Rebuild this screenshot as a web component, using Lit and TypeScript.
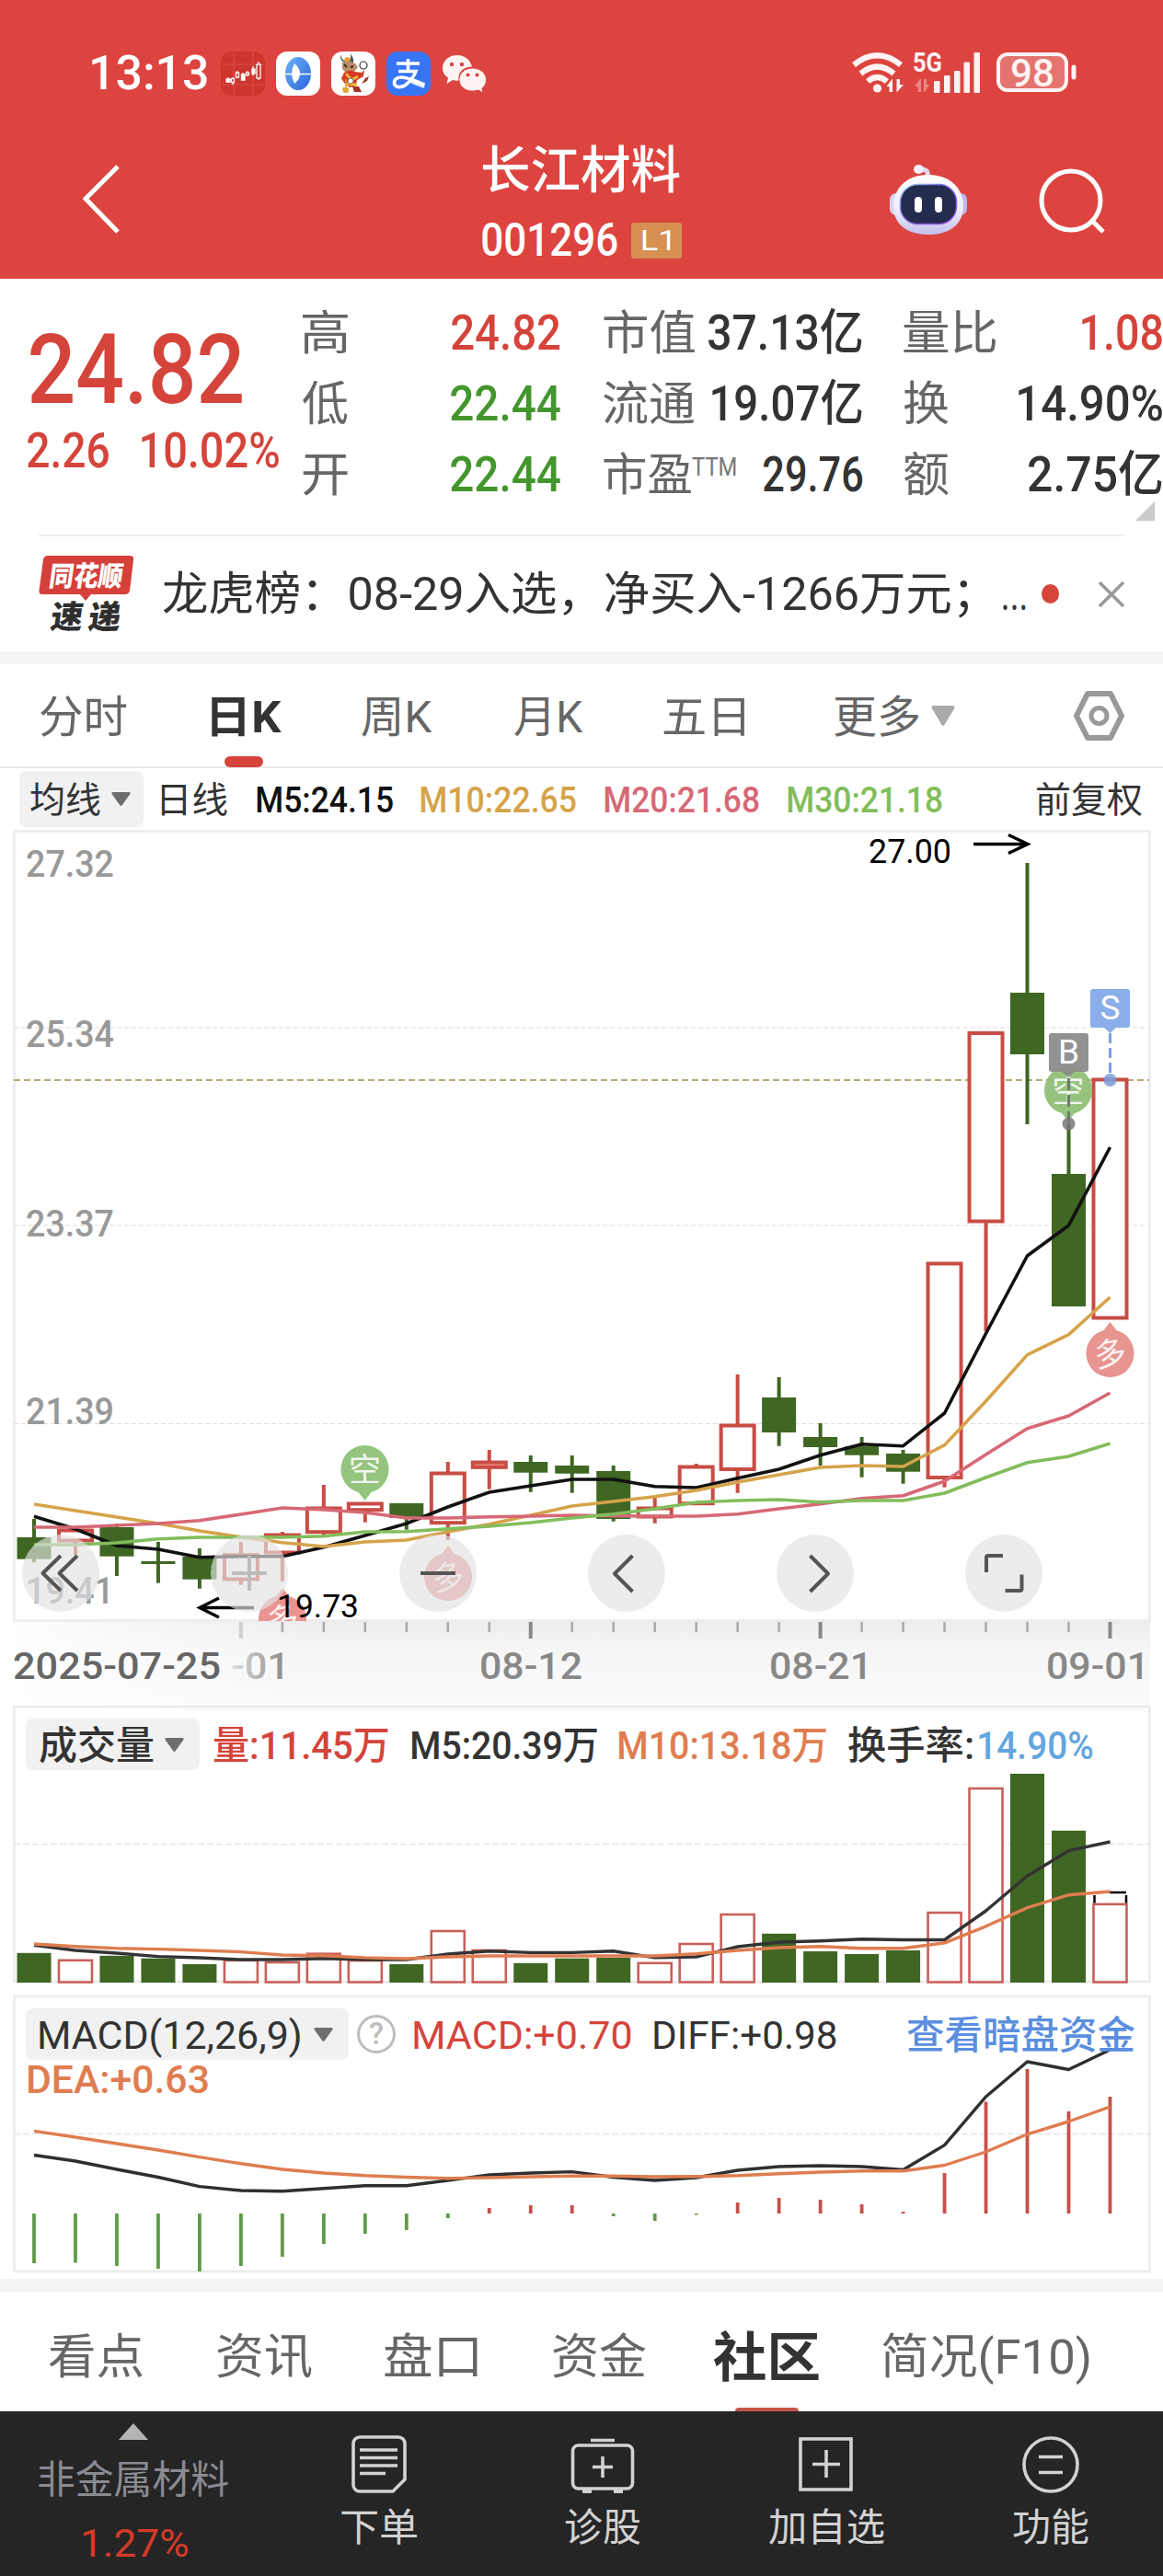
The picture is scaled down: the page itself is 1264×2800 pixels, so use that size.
import { LitElement, html, svg, css } from "lit";
import { customElement, property } from "lit/decorators.js";

const CANDLE_RED = "#c84d45";
const GREEN = "#3f6622";

const px = (i: number) => 37 + 44.98 * i;

/** Text squeezed or stretched so that its ink spans exactly `w` pixels. */
@customElement("fit-text")
class FitText extends LitElement {
  @property({ type: Number }) w = 0;
  @property() text = "";

  static styles = css`
    :host { display: inline-block; white-space: nowrap; text-align: left; }
    .ink { display: inline-block; transform-origin: 0 50%; white-space: pre; }
  `;

  updated() {
    const ink = this.renderRoot.querySelector(".ink") as HTMLElement;
    const cs = getComputedStyle(this);
    const ctx = document.createElement("canvas").getContext("2d")!;
    ctx.font = `${cs.fontStyle} ${cs.fontWeight} ${cs.fontSize} ${cs.fontFamily}`;
    const m = ctx.measureText(this.text);
    const left = m.actualBoundingBoxLeft;
    const width = left + m.actualBoundingBoxRight;
    const s = width > 0 ? this.w / width : 1;
    this.style.width = `${this.w}px`;
    ink.style.transform = `translateX(${left * s}px) scaleX(${s})`;
  }

  render() {
    return html`<span class="ink">${this.text}</span>`;
  }
}
void FitText;

const fit = (text: string, w: number, cls = "") =>
  html`<fit-text class=${cls} .text=${text} .w=${w}></fit-text>`;

const line = (ys: number[], color: string, width = 4) => svg`
  <polyline fill="none" stroke=${color} stroke-width=${width} stroke-linejoin="round"
    points=${ys.map((y, i) => `${px(i).toFixed(1)},${y}`).join(" ")}></polyline>`;

// [rising, body top, body bottom, high, low]
const candles: [number, number, number, number, number][] = [
  [0, 1671, 1694.7, 1651, 1698], [1, 1662, 1676, 1662, 1690], [0, 1660, 1691.7, 1656, 1713],
  [0, 1697, 1700, 1676, 1720.7], [0, 1691.7, 1716.7, 1683, 1726.7], [1, 1688.7, 1718, 1676, 1722.7],
  [1, 1667, 1689, 1665, 1718.7], [1, 1638, 1666.7, 1614, 1671], [1, 1633, 1642.7, 1633, 1654.7],
  [0, 1634, 1650, 1634, 1662.7], [1, 1600, 1656.7, 1589, 1674], [1, 1588, 1596.3, 1576, 1618.7],
  [0, 1589, 1600.7, 1582, 1621.7], [0, 1593, 1601.7, 1582, 1622.7], [0, 1599, 1651, 1593, 1653.7],
  [1, 1638, 1650, 1628, 1655.7], [1, 1593, 1635.7, 1591, 1635.7], [1, 1548, 1598.5, 1494, 1622.7],
  [0, 1519, 1557, 1497, 1571.7], [0, 1562, 1573, 1547, 1593], [0, 1572, 1581.7, 1562, 1605.7],
  [0, 1580, 1599.7, 1576, 1612.7], [1, 1372, 1607.5, 1372, 1616.7], [1, 1121.5, 1329, 1121.5, 1447],
  [0, 1079, 1146, 938, 1222], [0, 1276, 1420, 1222, 1420], [1, 1172, 1434, 1172, 1434],
];

const ma5 = [1648.3, 1662, 1680, 1684, 1692.7, 1691.7, 1691.7, 1681.7, 1669, 1656, 1638, 1622, 1615, 1608, 1608, 1615.7, 1617, 1606.7, 1597, 1581.7, 1569.7, 1571.7, 1536, 1449.5, 1365, 1332, 1247];
const ma10 = [1635, 1642, 1649, 1656, 1664, 1670.7, 1676.7, 1681, 1676, 1674, 1665, 1656.7, 1647, 1637, 1632, 1626.7, 1620, 1611, 1603, 1595, 1593, 1594, 1570.7, 1523, 1472.6, 1450.6, 1410];
const ma20 = [1660, 1660, 1658, 1656, 1652.7, 1646, 1639, 1641, 1644, 1650, 1650, 1648.7, 1648, 1647, 1647.7, 1648, 1648, 1645.7, 1640, 1634.7, 1628.7, 1625.7, 1610, 1581, 1552.7, 1539, 1514];
const ma30 = [1679, 1679, 1677, 1672.7, 1671, 1671, 1671, 1669.7, 1665, 1664.7, 1661.7, 1659, 1655, 1650, 1645.7, 1640, 1633, 1631, 1630, 1632.7, 1631, 1631, 1623, 1606, 1589.7, 1583, 1569];

const volumeTop = [2122.8, 2130.8, 2125.8, 2128.7, 2135, 2130.8, 2133, 2123.7, 2131, 2135, 2099, 2120, 2133.8, 2128.7, 2127.9, 2133.8, 2113, 2081, 2101.8, 2121, 2124, 2120, 2079, 1944, 1928, 1989.8, 2069.8];
const vol5 = [2114.4, 2120, 2123, 2126.6, 2128, 2130, 2130, 2128.7, 2130, 2130, 2124, 2120.7, 2122.4, 2122.4, 2120.7, 2127.9, 2127, 2116, 2111, 2109.8, 2107.7, 2108.5, 2108.5, 2077, 2039, 2011.7, 2002];
const vol10 = [2113, 2115.7, 2117.8, 2118.6, 2120, 2121.6, 2125, 2125.8, 2127.9, 2129, 2127, 2126, 2126, 2126, 2126, 2126, 2123.7, 2120, 2117, 2115.7, 2117.8, 2117.8, 2111.9, 2093.8, 2073.6, 2059.7, 2056];

const macdEnd = [2460, 2459.5, 2463, 2466, 2469, 2463, 2453, 2439, 2428, 2424, 2411, 2400, 2397, 2397, 2409, 2414, 2407.5, 2394, 2389, 2391, 2396, 2404, 2362, 2284.5, 2249, 2295, 2279];
const diff = [2342.5, 2349, 2358, 2366.5, 2376.6, 2381, 2381.7, 2378.7, 2375.8, 2375.8, 2370, 2364, 2362, 2360.6, 2366.5, 2370, 2367, 2359, 2355, 2354, 2355, 2358.5, 2331.6, 2279, 2241, 2249.5, 2228];
const dea = [2316.4, 2323, 2330, 2337, 2344.6, 2351.8, 2358, 2362, 2364.8, 2366.5, 2367.8, 2367, 2366, 2365.3, 2365.3, 2366, 2365.8, 2364.8, 2362.7, 2361, 2359.8, 2359.8, 2353.5, 2339, 2319.8, 2306, 2290];

const label = (x: number, base: number, w: number, text: string, size: number, fill: string, weight = 400) => svg`
  <text x=${x} y=${base} textLength=${w} lengthAdjust="spacingAndGlyphs" font-size=${size}
    font-weight=${weight} fill=${fill}>${text}</text>`;

const balloon = (cx: number, cy: number, up: boolean, char: string, fill: string) => svg`
  <path fill=${fill} d=${up
    ? `M${cx} ${cy - 34} l7 9 a26 26 0 1 1 -14 0 z`
    : `M${cx} ${cy + 34} l7 -9 a26 26 0 1 0 -14 0 z`}></path>
  <text x=${cx} y=${cy + 13} font-size="35" fill="#fff" fill-opacity=".88" text-anchor="middle"
    transform=${up ? `rotate(-10 ${cx} ${cy})` : "rotate(0)"}>${char}</text>`;

const roundButtons = [66, 271, 476, 681, 886, 1091];
const priceAxis: [string, number][] = [["27.32", 952.5], ["25.34", 1138], ["23.37", 1343.5], ["21.39", 1547.5], ["19.41", 1743]];

const priceChart = () => html`
  <svg class="chart" viewBox="0 900 1264 954" width="1264" height="954">
    <defs>
      <linearGradient id="band" x1="0" y1="0" x2="0" y2="1">
        <stop offset="0" stop-color="#ededed"></stop><stop offset=".35" stop-color="#f6f6f6"></stop>
        <stop offset="1" stop-color="#fbfbfb"></stop>
      </linearGradient>
      <linearGradient id="bandFade" x1="0" y1="0" x2="1" y2="0">
        <stop offset="0" stop-color="#fff"></stop><stop offset="1" stop-color="#fff" stop-opacity="0"></stop>
      </linearGradient>
      <linearGradient id="dateFade" gradientUnits="userSpaceOnUse" x1="240" y1="0" x2="312" y2="0">
        <stop offset="0" stop-color="#888" stop-opacity=".1"></stop><stop offset="1" stop-color="#888"></stop>
      </linearGradient>
      <clipPath id="plot"><rect x="15" y="903" width="1235" height="859"></rect></clipPath>
    </defs>
    <rect x="15" y="1762" width="1235" height="92" fill="url(#band)"></rect>
    <rect x="0" y="1762" width="330" height="92" fill="url(#bandFade)"></rect>
    <rect x="15.5" y="903.5" width="1234" height="858" fill="none" stroke="#ebebeb" stroke-width="2.5"></rect>
    ${[1117, 1332, 1547.5].map((y) => svg`<path d="M15 ${y}H1249" stroke="#dedede" stroke-width="1.2" stroke-dasharray="5 3"></path>`)}
    ${priceAxis.map(([t, y]) => label(28, y, 96, t, 41, "#999", 500))}
    <path d="M15 1174H1249" stroke="#b7aa75" stroke-width="2" stroke-dasharray="7 4"></path>
    <g clip-path="url(#plot)">
      ${candles.map(([up, top, bot, hi, lo], i) => {
        const x = px(i);
        return up
          ? svg`<path d="M${x} ${hi}V${top}M${x} ${bot}V${lo}" stroke=${CANDLE_RED} stroke-width="4"></path>
              <rect x=${x - 18} y=${top + 1.5} width="36" height=${Math.max(bot - top - 3, 3)}
                fill=${i === 11 ? "#f08f88" : "#fff"} stroke=${CANDLE_RED} stroke-width="4"></rect>`
          : svg`<path d="M${x} ${hi}V${lo}" stroke=${GREEN} stroke-width="4"></path>
              <rect x=${x - 18.5} y=${top} width="37" height=${bot - top} fill=${GREEN}></rect>`;
      })}
      ${line(ma5, "#111", 3.6)}${line(ma10, "#d6a34a", 3.6)}${line(ma20, "#d76876", 3.6)}${line(ma30, "#82bd5c", 3.6)}
      ${balloon(396.5, 1597, false, "空", "#95c47e")}
      ${balloon(1161, 1185, false, "空", "rgba(141,191,116,.92)")}
      ${balloon(487, 1714, true, "多", "#e89490")}
      ${balloon(307, 1760, true, "多", "#e89490")}
      ${balloon(1206.5, 1471, true, "多", "#e89490")}
    </g>
    <path d="M1058 917.5H1117M1096 907.5L1117 917.5L1096 927.5" fill="none" stroke="#000" stroke-width="3.4"></path>
    ${label(944, 938, 90, "27.00", 36, "#000")}
    <path d="M276 1747.5H217M238 1737L217 1747.5L238 1758" fill="none" stroke="#000" stroke-width="3.4"></path>
    ${label(301, 1757.5, 89, "19.73", 35, "#000")}
    <g>
      <path d="M1143 1123h37a3 3 0 0 1 3 3v36a3 3 0 0 1-3 3h-12l-7 6l-7-6h-11a3 3 0 0 1-3-3v-36a3 3 0 0 1 3-3z" fill="#8c8c8c" fill-opacity=".95"></path>
      <text x="1161.5" y="1156" font-size="37" fill="#fff" text-anchor="middle">B</text>
      <path d="M1161.5 1172V1222" stroke="#6f7a6a" stroke-width="3" stroke-dasharray="13 5"></path>
      <circle cx="1161.5" cy="1221.5" r="7" fill="#777" fill-opacity=".85"></circle>
      <path d="M1188 1075h37a3 3 0 0 1 3 3v36a3 3 0 0 1-3 3h-12l-6.5 6l-6.5-6h-12a3 3 0 0 1-3-3v-36a3 3 0 0 1 3-3z" fill="#8aaeea"></path>
      <text x="1206.5" y="1107.5" font-size="37" fill="#fff" text-anchor="middle">S</text>
      <path d="M1206.5 1123V1174" stroke="#7d9fdc" stroke-width="3" stroke-dasharray="11 5"></path>
      <circle cx="1206.5" cy="1174" r="7" fill="#7c9bd8" fill-opacity=".85"></circle>
    </g>
    ${roundButtons.map((x) => svg`<circle cx=${x} cy="1710" r="42" fill="#e2e2e2" fill-opacity=".66"></circle>`)}
    <g fill="none" stroke="#555" stroke-width="4" stroke-linejoin="round">
      <path d="M66 1691L46.5 1710L66 1729M84 1691L64.5 1710L84 1729"></path>
      <path d="M252 1710H290M271 1691V1729" stroke="#bdbdbd"></path>
      <path d="M457 1710H495"></path>
      <path d="M687.5 1691L668 1710.5L687.5 1730"></path>
      <path d="M880.5 1691L900 1710.5L880.5 1730"></path>
      <path d="M1090 1691H1074a2 2 0 0 0-2 2V1709M1092.5 1729H1108.5a2 2 0 0 0 2-2V1711.5"></path>
    </g>
    ${Array.from({ length: 22 }, (_, k) => k + 5).map((i) => {
      const major = [5, 12, 19, 26].includes(i);
      return svg`<path d="M${px(i)} 1763V${major ? 1781 : 1774}" stroke=${i === 5 ? "#cfcfcf" : major ? "#888" : "#aaa"} stroke-width=${major ? 4 : 2.5}></path>`;
    })}
    ${label(14, 1825, 226, "2025-07-25", 41, "#666", 500)}
    ${label(251, 1825, 64, "-01", 41, "url(#dateFade)", 500)}
    ${label(521, 1825, 112, "08-12", 41, "#888", 500)}
    ${label(836, 1825, 112, "08-21", 41, "#888", 500)}
    ${label(1137, 1825, 112, "09-01", 41, "#888", 500)}
  </svg>`;

const volumeChart = () => html`
  <svg class="chart" viewBox="0 1854 1264 306" width="1264" height="306">
    <rect x="200" y="1854" width="1050" height="7" fill="#fbfbfb"></rect>
    <rect x="15.5" y="1855" width="1234" height="299" fill="none" stroke="#ebebeb" stroke-width="2.5"></rect>
    <path d="M15 2004.5H1249" stroke="#dedede" stroke-width="1.2" stroke-dasharray="7 3"></path>
    ${volumeTop.map((y, i) => candles[i][0]
      ? svg`<rect x=${px(i) - 18} y=${y} width="36" height=${2154.5 - y} fill="#fff" stroke="#c8605a" stroke-width="2.6"></rect>`
      : svg`<rect x=${px(i) - 18.5} y=${y} width="37" height=${2155 - y} fill=${GREEN}></rect>`)}
    <path d="M1189.5 2060V2068.5M1224 2060V2068.5M1206 2057H1224" stroke="#000" stroke-width="2.5" fill="none"></path>
    ${line(vol5, "#333", 3.4)}${line(vol10, "#df7d50", 3.4)}
  </svg>`;

const macdChart = () => html`
  <svg class="chart" viewBox="0 2160 1264 317" width="1264" height="317">
    <rect x="15.5" y="2170" width="1234" height="299" fill="none" stroke="#ebebeb" stroke-width="2.5"></rect>
    <path d="M15 2319.5H1249" stroke="#dedede" stroke-width="1.2" stroke-dasharray="7 3"></path>
    ${macdEnd.map((y, i) => svg`<path d="M${px(i)} 2406V${y}" stroke=${y > 2406 ? "#609b48" : "#c4514a"} stroke-width="3.8"></path>`)}
    ${line(diff, "#2f2f2f", 3.4)}${line(dea, "#df7d50", 3.4)}
  </svg>`;

const caret = (w: number, h: number, fill: string) => html`
  <svg width=${w} height=${h} viewBox="0 0 20 14" preserveAspectRatio="none">
    <path d="M1.5 0H18.5Q20.3 .6 19.3 2L11.3 13Q10 14.6 8.7 13L.7 2Q-.3 .6 1.5 0Z" fill=${fill}></path>
  </svg>`;

const statusApps = () => html`
  <svg width="294" height="56" viewBox="237 52 294 56">
    <defs>
      <linearGradient id="ring" x1="0" y1="0" x2="1" y2="1">
        <stop offset="0" stop-color="#6db4f7"></stop><stop offset="1" stop-color="#2a63dc"></stop>
      </linearGradient>
    </defs>
    <rect x="240" y="56" width="48" height="48" rx="12" fill="#cf352f"></rect>
    <path d="M254 57V103M275 57V103M241 70H287M241 92H287" stroke="#d8504a" stroke-width="1"></path>
    <g stroke="#fff" stroke-width="1.3" fill="none">
      <path d="M248 84V90M253 84V92M258 77V85M264 79V88M269 77V83M275 72V82M281 67V87"></path>
      <g fill="#fff"><rect x="246" y="86" width="4" height="3"></rect><rect x="262.5" y="81" width="3.5" height="6"></rect><rect x="274" y="75" width="3" height="5"></rect></g>
      <g fill="#cf352f"><rect x="251.5" y="85.5" width="3" height="4"></rect><rect x="256.5" y="79" width="3" height="5"></rect><rect x="267.5" y="79" width="3" height="2.5"></rect><rect x="279" y="70" width="4" height="15"></rect></g>
    </g>
    <rect x="300" y="56" width="48" height="48" rx="12" fill="#fff"></rect>
    <ellipse cx="324" cy="80" rx="14" ry="18" fill="url(#ring)"></ellipse>
    <path d="M320 69Q326 74 326 80Q326 86 320 91Q317 85 317 80Q317 74 320 69Z" fill="#fff"></path>
    <path d="M308 80.5H340" stroke="#fff" stroke-width="1.5"></path>
    <rect x="360" y="56" width="48" height="48" rx="12" fill="#fff"></rect>
    <path d="M370 59Q369 66 375 68L384 68Q385 64 381 58Q382 64 379 66H374Q371 64 370 59Z" fill="#4a5560"></path>
    <path d="M374 64Q378 60 381 64L380 67H375Z" fill="#e8a23c"></path>
    <path d="M372 68Q378 64 386 69L389 73L385 78H375L372 75Z" fill="#b98d68"></path>
    <path d="M374 70l3 3M381 73l3-1" stroke="#3b2a20" stroke-width="2"></path>
    <path d="M374 79Q380 75 386 78L393 79L396 76L395 83L388 87L387 93L380 95L374 90L371 85Z" fill="#d43a22"></path>
    <path d="M376 80l6 7l7-4M376 91l12 1" stroke="#f0b73a" stroke-width="3" fill="none"></path>
    <circle cx="395" cy="71" r="4" fill="#fff" stroke="#333" stroke-width="1.2"></circle>
    <circle cx="381" cy="88" r="3" fill="#fff" stroke="#555" stroke-width=".8"></circle>
    <path d="M376 86V96M373 96h5v4h-4z" stroke="#d7a01f" stroke-width="1.5" fill="#e9b62e"></path>
    <path d="M383 94h7l3 6h-8zM393 91l4-6l4-2l-2 5z" fill="#a03522"></path>
    <rect x="420" y="56" width="48" height="48" rx="12" fill="#3875f5"></rect>
    <path d="M431 69H456M443.5 64V76M433 77.5H452Q449 86 440 93Q431 97 428.5 91Q428 84 437 84Q446 85 461 92" fill="none" stroke="#fff" stroke-width="3.6"></path>
    <path d="M446 87Q454 91 462 90L461 96Q452 93 446 90Z" fill="#fff" fill-opacity=".85"></path>
    <g fill="#fff3f3">
      <path d="M497 60C488 60 481 66 481 74C481 79 483.5 82 487 84.5L485.5 91L492 87Q496 88 499 87.5C497 79 503 73 513 72.5C511 65 505 60 497 60Z"></path>
      <path d="M513.5 74C505 74 499 79.5 499 86.5C499 93.5 505 99 513.5 99Q517 99 520 98L525 101L524 96C527 94 528.5 90.5 528.5 86.5C528.5 79.5 522 74 513.5 74Z" stroke="#dd443f" stroke-width="1"></path>
    </g>
    <g fill="#d8443f"><circle cx="491" cy="70" r="2.2"></circle><circle cx="502" cy="70" r="2.2"></circle><circle cx="508.5" cy="81.5" r="2"></circle><circle cx="518.5" cy="81.5" r="2"></circle></g>
  </svg>`;

const statusSystem = () => html`
  <svg width="248" height="60" viewBox="924 48 248 60">
    <g fill="none" stroke="#fff3f3" stroke-width="6.2">
      <path d="M928 70.5Q953.5 50 979 70.5"></path>
      <path d="M935.5 80Q953.5 65 971.5 80"></path>
      <path d="M943 88.5Q953.5 79.5 964 88.5"></path>
    </g>
    <circle cx="953.5" cy="96" r="4.6" fill="#fff3f3"></circle>
    <g fill="#fff3f3">
      <path d="M970 86V100H966.5V94H963.5L969.5 86ZM974.5 100V86H978V92H982L975 100Z"></path>
      <path d="M1001 86V100H997.5V94H994L1000 86ZM1004 100V86H1007V92H1010L1005 100Z" opacity=".4"></path>
      <text x="992" y="78" textLength="32" lengthAdjust="spacingAndGlyphs" font-size="30" font-weight="700">5G</text>
      <rect x="1015" y="88" width="6.5" height="13" rx="1"></rect><rect x="1026" y="82" width="6.5" height="19" rx="1"></rect>
      <rect x="1037" y="77" width="6.5" height="24" rx="1"></rect><rect x="1047.5" y="67.5" width="6.5" height="33.5" rx="1"></rect>
      <rect x="1058.5" y="57" width="6.5" height="44" rx="1"></rect>
      <rect x="1085" y="59" width="74" height="39" rx="10" fill="#fff" fill-opacity=".25" stroke="#fff3f3" stroke-width="4"></rect>
      <rect x="1164.5" y="70.5" width="5" height="16" rx="2.5"></rect>
      <text x="1098" y="94" textLength="48" lengthAdjust="spacingAndGlyphs" font-size="43" font-weight="500">98</text>
    </g>
  </svg>`;

const robot = () => html`
  <svg class="robot" width="86" height="80" viewBox="966 175 86 80">
    <defs>
      <linearGradient id="shell" x1="0" y1="0" x2="0" y2="1">
        <stop offset="0" stop-color="#fff"></stop><stop offset=".6" stop-color="#ecebfb"></stop><stop offset="1" stop-color="#c3c0ea"></stop>
      </linearGradient>
      <linearGradient id="rim" x1="0" y1="0" x2="1" y2="1">
        <stop offset="0" stop-color="#9fe3f0"></stop><stop offset=".4" stop-color="#7a64e0"></stop><stop offset="1" stop-color="#9a4fe0"></stop>
      </linearGradient>
    </defs>
    <path d="M1008 190Q1010 180 1000 181" fill="none" stroke="#ded9f3" stroke-width="5"></path>
    <ellipse cx="998.5" cy="181" rx="5.5" ry="5" fill="#f3efff"></ellipse>
    <rect x="967" y="207" width="14" height="24" rx="7" fill="#d7d4f3"></rect>
    <rect x="1037" y="207" width="14" height="24" rx="7" fill="#bdb9ea"></rect>
    <path d="M1009 187C1034 187 1047 203 1047 221C1047 241 1032 252 1009 252C986 252 971 241 971 221C971 203 984 187 1009 187Z" fill="url(#shell)"></path>
    <rect x="978.5" y="197.500" width="61" height="43" rx="19" fill="#232b4e" stroke="url(#rim)" stroke-width="1.500"></rect>
    <rect x="994" y="211" width="8" height="17" rx="4" fill="#fff"></rect><rect x="1016" y="211" width="8" height="17" rx="4" fill="#fff"></rect>
  </svg>`;

const newsLogo = () => html`
  <svg width="104" height="98" viewBox="43 596 104 98">
    <path d="M53 603H142Q147 603 146 608L142 641Q141 645 137 645H100L94 652L88 645H47Q43 645 43.5 641L48 607Q49 603 53 603Z" fill="#d5403b"></path>
    <g font-weight="900" transform="translate(0 645) skewX(-8)">
      <text x="52" y="-9" font-size="30" textLength="80" lengthAdjust="spacingAndGlyphs" fill="#fff">同花顺</text>
      <text x="60" y="37.5" font-size="35" textLength="76" fill="#2f2f2f">速递</text>
    </g>
  </svg>`;

const quotes = [
  [["高", 49, "24.82", 118, "up"], ["低", 49, "22.44", 119, "down"], ["开", 49, "22.44", 119, "down"]],
  [["市值", 99, "37.13亿", 167, ""], ["流通", 99, "19.07亿", 163, ""], ["市盈", 95, "29.76", 107, ""]],
  [["量比", 101, "1.08", 87, "up"], ["换", 49, "14.90%", 156, ""], ["额", 49, "2.75亿", 145, ""]],
] as [string, number, string, number, string][][];

const actions = [
  { name: "下单", w: 82, icon: svg`<path d="M9 3H51a7 7 0 0 1 7 7V49L45 62H9a7 7 0 0 1-7-7V10a7 7 0 0 1 7-7z"></path><path d="M9 17H50M9 25.5H50M9 34H50M9 42.5H37"></path>` },
  { name: "诊股", w: 82, icon: svg`<rect x="-2.5" y="12" width="65" height="47" rx="6"></rect><path d="M17 6.5H43M30 24V47M19 35.5H41"></path><path d="M8 61.5H18M42 61.5H52" stroke-width="5"></path>` },
  { name: "加自选", w: 125, icon: svg`<rect x="2" y="5" width="55" height="55"></rect><path d="M30 17V47M15 32.5H45"></path>` },
  { name: "功能", w: 82, icon: svg`<circle cx="30" cy="33" r="29"></circle><path d="M17 24.5H43M17 41.5H43"></path>` },
];

@customElement("app-root")
class AppRoot extends LitElement {
  static styles = css`
    :host {
      display: block; width: 1264px; height: 2800px; overflow: hidden; background: #fff; color: #333;
      font-family: Roboto, "Noto Sans CJK SC", sans-serif;
    }
    * { box-sizing: border-box; }
    svg { display: block; flex: none; }
    .top { background: #dd443f; color: #fff; height: 303px; }
    .status { display: flex; align-items: center; padding: 52px 92px 0 100px; height: 108px; }
    .status svg:last-child { margin-top: -4px; }
    .time { font-size: 52px; font-weight: 500; line-height: 56px; margin-right: 12px; }
    .grow { flex: 1; }
    .header { display: grid; grid-template-columns: 432px 442px 163px auto; padding-left: 92px; height: 195px; }
    .back { margin: 69px 0 0 -2px; }
    .title { padding-top: 47px; }
    .name { font-size: 55px; line-height: 60px; font-weight: 500; display: block; }
    .code { display: flex; align-items: center; gap: 15px; height: 40px; margin-top: 26px; }
    .number { font-size: 50px; font-weight: 500; line-height: 40px; }
    .badge { width: 55px; height: 39px; border-radius: 3px; background: #d59052; display: grid; place-items: center; font-size: 32px; line-height: 39px; }
    .robot { margin-top: 70px; }
    .search { margin-top: 75px; }
    .quote { display: grid; grid-template-columns: 296px 281px 281px 281px; padding: 21px 0 0 33px; height: 278px; }
    .col1 { margin-right: 1px; } .col2 { margin: 0 -46px 0 46px; } .col3 { margin: 0 -91px 0 91px; }
    .price { font-size: 105px; font-weight: 500; line-height: 100px; margin-top: 29px; display: block; }
    .change { display: flex; gap: 36px; margin: 12px 0 0 -3px; font-size: 53px; font-weight: 500; line-height: 50px; }
    .up, .price, .change { color: #d5443b; }
    .down { color: #43962d; }
    .qrow { display: flex; align-items: center; height: 77px; font-size: 53px; line-height: 77px; }
    .qrow .label { color: #666; font-size: 51px; margin-right: auto; }
    .qrow .value { font-weight: 500; }
    .ttm { font-size: 27px; line-height: 30px; color: #777; margin: -17px auto 0 1px; }
    .qrow.small .label { font-size: 49px; margin-right: 0; }
    .corner { width: 21px; height: 21px; margin: -10px 8px 0 auto; background: #cbcbcb; clip-path: polygon(100% 0, 100% 100%, 0 100%); }
    .news { display: flex; align-items: center; height: 127px; margin: 0 42px; border-top: 2px solid #eee; font-size: 50px; line-height: 60px; }
    .news .text { margin-left: 31px; padding-top: 1px; }
    .news .more { margin-left: 37px; }
    .dot { width: 21px; height: 21px; border-radius: 50%; background: #d5443b; margin: 0 43px 0 17px; }
    .gap { height: 14px; background: #f4f4f4; }
    .tabs { display: grid; align-items: center; grid-template-columns: 186px 163px 166px 162px 186px 105px 154px auto; height: 113px; padding-left: 44px; border-bottom: 2px solid #eaeaea; font-size: 48px; line-height: 60px; color: #666; }
    .tabs fit-text { padding-top: 4px; }
    .tabs .on { position: relative; color: #333; font-weight: 700; }
    .tabs .on::after { content: ""; position: absolute; left: 14px; bottom: -24px; width: 42px; height: 12px; border-radius: 6px; background: #d5443b; }
    .legend { display: grid; align-items: center; grid-template-columns: 154px 104px 178px 200px 199px 271px auto; height: 65px; padding: 2px 0 0 21px; font-size: 39px; font-weight: 500; line-height: 60px; }
    .legend fit-text { padding-top: 2px; }
    .cjk { font-weight: 400; }
    .pill { display: flex; align-items: center; background: #f1f1f1; border-radius: 8px; line-height: 56px; }
    .legend .pill { width: 135px; height: 61px; padding-left: 12px; gap: 12px; }
    .panel { display: grid; }
    .panel > * { grid-area: 1 / 1; min-width: 0; }
    .over { display: grid; align-items: center; align-content: start; font-size: 42px; font-weight: 500; line-height: 52px; padding-left: 28px; }
    .over fit-text { padding-top: 3px; }
    .over .pill { height: 56px; padding-left: 15px; }
    .volume { grid-template-columns: 204px 216px 225px 249px 142px auto; padding-top: 14px; }
    .volume .pill { width: 189px; gap: 12px; }
    .macd { grid-template-columns: 360px 62px 261px 275px auto; padding-top: 23px; }
    .macd .pill { width: 351px; gap: 15px; }
    .over .dea { line-height: 38px; margin-left: 3px; }
    .m5 { color: #111; } .m10 { color: #d6a34a; } .m20 { color: #d76876; } .m30 { color: #82bd5c; }
    .orange { color: #e07d50; } .blue { color: #62a6e0; } .link { color: #5b8edf; }
    .help { width: 42px; height: 42px; border: 3px solid #bdbdbd; border-radius: 50%; color: #bdbdbd; font-size: 33px; line-height: 36px; text-align: center; }
    .macd .pill, .macd .plain { font-weight: 400; }
    .chart { font-family: inherit; }
    .sections { display: grid; grid-template-columns: 183px 182px 183px 174px 184px auto; height: 130px; padding: 14px 0 0 53px; font-size: 52px; line-height: 116px; color: #666; }
    .sections .on { position: relative; font-size: 58px; font-weight: 700; color: #333; }
    .sections .on::after { content: ""; position: absolute; left: 24px; bottom: 0; width: 69px; height: 4px; border-radius: 4px 4px 0 0; background: #c5554a; }
    .bottom { display: grid; grid-template-columns: 290px repeat(4, 243.3px); height: 179px; background: #252525; font-size: 42px; color: #d2d2d2; }
    .sector { display: flex; flex-direction: column; align-items: center; padding-top: 13px; }
    .sector .arrow { width: 32px; height: 18px; background: #b4b4b4; clip-path: polygon(50% 0, 100% 100%, 0 100%); }
    .sector .sname { color: #8a8a92; line-height: 60px; margin-top: 14px; }
    .sector .pct { color: #d63a28; line-height: 50px; margin: 13px 0 0 3px; font-size: 43px; }
    .action { display: flex; flex-direction: column; align-items: center; padding-top: 25px; }
    .action svg { overflow: visible; }
    .action .aname { line-height: 50px; margin-top: 11px; }
  `;

  render() {
    return html`
      <div class="top">
        <div class="status">
          ${fit("13:13", 125, "time")}${statusApps()}<span class="grow"></span>${statusSystem()}
        </div>
        <div class="header">
          <svg class="back" width="42" height="80" viewBox="0 0 42 80"><path d="M38 4L3 39L38 75" fill="none" stroke="#fff" stroke-width="5"></path></svg>
          <div class="title">
            ${fit("长江材料", 215, "name")}
            <div class="code">${fit("001296", 147, "number")}<span class="badge">${fit("L1", 31)}</span></div>
          </div>
          ${robot()}
          <svg class="search" width="72" height="72" viewBox="1129 182 72 72"><circle cx="1164" cy="217" r="32" fill="none" stroke="#fff" stroke-width="5"></circle><path d="M1187 239L1199 251" stroke="#fff" stroke-width="5"></path></svg>
        </div>
      </div>

      <div class="quote">
        <div>
          ${fit("24.82", 230, "price")}
          <div class="change">${fit("2.26", 88)}${fit("10.02%", 149)}</div>
        </div>
        ${quotes.map((rows, c) => html`<div class="col${c + 1}">
          ${rows.map(([name, nw, value, vw, tone]) => html`<div class="qrow ${name === "市盈" ? "small" : ""}">
            ${fit(name, nw, "label")}${name === "市盈" ? fit("TTM", 48, "ttm") : ""}${fit(value, vw, `value ${tone}`)}
          </div>`)}
          ${c === 2 ? html`<div class="corner"></div>` : ""}
        </div>`)}
      </div>

      <div class="news">
        ${newsLogo()}
        ${fit("龙虎榜：08-29入选，净买入-1266万元；", 876, "text")}${fit("...", 25, "more")}
        <span class="dot"></span>
        <svg width="28" height="28" viewBox="0 0 28 28"><path d="M1 1L27 27M27 1L1 27" stroke="#999" stroke-width="3.5" fill="none"></path></svg>
      </div>
      <div class="gap"></div>

      <div class="tabs">
        ${fit("分时", 94)}${fit("日K", 76, "on")}${fit("周K", 77)}${fit("月K", 75)}${fit("五日", 88)}${fit("更多", 92)}
        ${caret(26, 22, "#aaa")}
        <svg width="58" height="56" viewBox="0 0 58 56"><path d="M16 4H41L53 28L41 52H16L4 28Z" fill="none" stroke="#999" stroke-width="6" stroke-linejoin="round"></path><circle cx="28.5" cy="28" r="8.5" fill="none" stroke="#999" stroke-width="5"></circle></svg>
      </div>

      <div class="legend">
        <div class="pill">${fit("均线", 76, "cjk")}${caret(21, 15, "#6e6e6e")}</div>
        ${fit("日线", 72, "cjk")}${fit("M5:24.15", 148, "m5")}${fit("M10:22.65", 169, "m10")}${fit("M20:21.68", 168, "m20")}${fit("M30:21.18", 168, "m30")}${fit("前复权", 114, "cjk")}
      </div>
      ${priceChart()}

      <div class="panel">
        ${volumeChart()}
        <div class="over volume">
          <div class="pill">${fit("成交量", 124)}${caret(21, 15, "#6e6e6e")}</div>
          ${fit("量:11.45万", 190, "up")}${fit("M5:20.39万", 201)}${fit("M10:13.18万", 225, "orange")}${fit("换手率:", 135)}${fit("14.90%", 124, "blue")}
        </div>
      </div>

      <div class="panel">
        ${macdChart()}
        <div class="over macd">
          <div class="pill">${fit("MACD(12,26,9)", 283)}${caret(21, 15, "#6e6e6e")}</div>
          <span class="help">?</span>
          ${fit("MACD:+0.70", 236, "up plain")}${fit("DIFF:+0.98", 198, "plain")}${fit("查看暗盘资金", 248, "link")}
          ${fit("DEA:+0.63", 195, "orange dea")}
        </div>
      </div>
      <div class="gap"></div>

      <div class="sections">
        ${fit("看点", 102)}${fit("资讯", 103)}${fit("盘口", 101)}${fit("资金", 101)}${fit("社区", 115, "on")}${fit("简况(F10)", 225)}
      </div>

      <div class="bottom">
        <div class="sector"><span class="arrow"></span>${fit("非金属材料", 206, "sname")}${fit("1.27%", 114, "pct")}</div>
        ${actions.map((a) => html`<div class="action">
          <svg width="60" height="66" viewBox="0 0 60 66" fill="none" stroke="#d2d2d2" stroke-width="3.6">${a.icon}</svg>
          ${fit(a.name, a.w, "aname")}
        </div>`)}
      </div>
    `;
  }
}
void AppRoot;
